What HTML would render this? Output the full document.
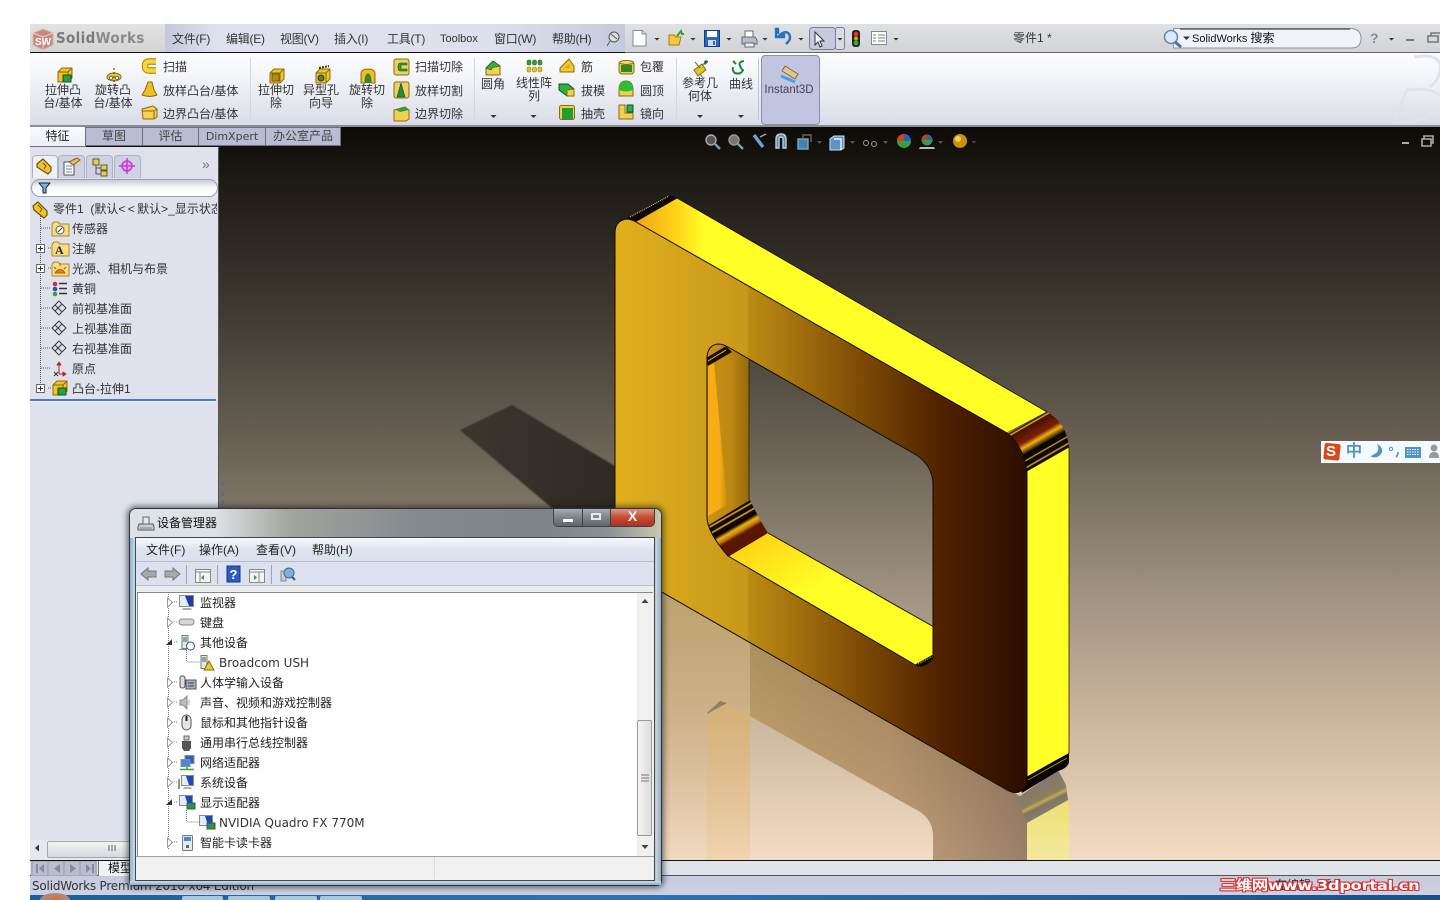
<!DOCTYPE html>
<html><head><meta charset="utf-8"><title>SolidWorks</title>
<style>
html,body{margin:0;padding:0;width:1440px;height:900px;overflow:hidden;background:#fff}
body{position:relative;font:12px/14px "Liberation Sans","WenQuanYi Zen Hei","Noto Sans CJK SC",sans-serif;color:#333}
.a,.t,.c{position:absolute}
.t{white-space:nowrap}
.c{white-space:nowrap;text-align:center;transform:translateX(-50%)}
svg{position:absolute;left:0;top:0;overflow:visible}
.v{font-family:"DejaVu Sans","WenQuanYi Zen Hei",sans-serif}
.m{letter-spacing:-.25px}
.tab{position:absolute;top:127px;height:17px;background:#b9bdd1;border:1px solid #6c7082;border-left:0;text-align:center;line-height:17px;color:#444;box-sizing:content-box}
</style></head><body>

<!-- title bar -->
<div class="a" style="left:30px;top:24px;width:135px;height:28px;background:linear-gradient(#e2e2e2,#d4d4d4)"></div>
<div class="a" style="left:165px;top:24px;width:460px;height:28px;background:linear-gradient(90deg,#c4c8dc,#dfe2ee 12%,#dde0ec 70%,#c6cade)"></div>
<div class="a" style="left:625px;top:24px;width:815px;height:28px;background:linear-gradient(#e0e1e4,#d2d3d6)"></div>
<div class="a" style="left:30px;top:52px;width:595px;height:1px;background:#111"></div>
<div class="a" style="left:625px;top:52px;width:815px;height:1px;background:#66686c"></div>
<div class="a" style="left:56px;top:29px;font:bold 15.5px/18px 'DejaVu Sans',sans-serif;letter-spacing:.4px;color:#8a8a8c;white-space:nowrap;transform:scaleX(.87);transform-origin:left"><span style="color:#7a7a7c">Solid</span>Works</div>

<!-- ribbon -->
<div class="a" style="left:30px;top:53px;width:1410px;height:72px;background:linear-gradient(#fdfdfe,#f3f4f8 35%,#d9dce8)"></div>
<div class="a" style="left:30px;top:125px;width:1410px;height:2px;background:#8a8c98"></div>
<div class="a" style="left:250px;top:58px;width:1px;height:62px;background:#d4d6e0"></div>
<div class="a" style="left:474px;top:58px;width:1px;height:62px;background:#d4d6e0"></div>
<div class="a" style="left:676px;top:58px;width:1px;height:62px;background:#d4d6e0"></div>
<div class="a" style="left:758px;top:58px;width:1px;height:62px;background:#c4c6d2"></div>
<div class="a" style="left:761px;top:55px;width:57px;height:68px;background:#c2c5e0;border:1px solid #8a8ea8;border-radius:4px"></div>

<!-- viewport -->
<div class="a" style="left:219px;top:127px;width:1221px;height:733px;background:linear-gradient(#0e0b07 0,#1f1b16 8%,#3d372f 24%,#6b6356 44%,#a09382 64%,#c9b49c 80%,#f3dcc3 100%)"></div>
<div class="a" style="left:30px;top:127px;width:311px;height:20px;background:#14100c"></div>

<!-- left panel -->
<div class="a" style="left:30px;top:147px;width:188px;height:713px;background:#dfe2ed"></div>
<div class="a" style="left:218px;top:147px;width:1px;height:713px;background:#555"></div>
<div class="a" style="left:30px;top:399px;width:186px;height:2px;background:#4a7db5"></div>
<div class="a" style="left:30px;top:401px;width:186px;height:1px;background:#f2f4f8"></div>

<!-- tabs -->
<div class="a" style="left:30px;top:126px;width:310px;height:1px;background:#8a8c98"></div>
<div class="tab" style="left:86px;width:56px">草图</div>
<div class="tab" style="left:143px;width:55px">评估</div>
<div class="tab v" style="left:199px;width:66px;font-size:11px">DimXpert</div>
<div class="tab" style="left:266px;width:74px">办公室产品</div>
<div class="a" style="left:30px;top:127px;width:55px;height:19px;background:linear-gradient(#fafbfd,#eceef4);border-right:1px solid #6c7082;border-bottom:1px solid #6c7082;text-align:center;line-height:18px;color:#222">特征</div>

<!-- panel tab strip -->
<div class="a" style="left:32px;top:155px;width:24px;height:22px;background:#eef0f6;border:1px solid #aeb2c2;border-bottom:0;border-radius:4px 4px 0 0"></div>
<div class="a" style="left:58px;top:155px;width:25px;height:22px;background:#cfd2e0;border:1px solid #aeb2c2;border-bottom:0;border-radius:4px 4px 0 0"></div>
<div class="a" style="left:86px;top:155px;width:25px;height:22px;background:#cfd2e0;border:1px solid #aeb2c2;border-bottom:0;border-radius:4px 4px 0 0"></div>
<div class="a" style="left:114px;top:155px;width:25px;height:22px;background:#cfd2e0;border:1px solid #aeb2c2;border-bottom:0;border-radius:4px 4px 0 0"></div>
<div class="a" style="left:31px;top:179px;width:185px;height:16px;background:linear-gradient(#c9ccd8,#f6f7fa 45%,#fff);border:1px solid #9a9eac;border-radius:9px"></div>
<div class="t" style="left:202px;top:157px;color:#777;font-size:14px">»</div>

<!-- scrollbar + model tabs + status -->
<div class="a" style="left:30px;top:840px;width:188px;height:20px;background:#e6e8ef"></div>
<div class="a" style="left:47px;top:841px;width:85px;height:15px;background:linear-gradient(#f4f4f4,#d6d8dc);border:1px solid #a4a6ac;border-radius:2px"></div>
<div class="a" style="left:30px;top:860px;width:1410px;height:1px;background:#111"></div>
<div class="a" style="left:30px;top:861px;width:1410px;height:14px;background:#e1e3ea"></div>
<div class="a" style="left:30px;top:875px;width:1410px;height:1px;background:#555"></div>
<div class="a" style="left:30px;top:876px;width:1410px;height:19px;background:linear-gradient(#c6cadd,#cdd1e2)"></div>
<div class="a" style="left:30px;top:895px;width:1410px;height:5px;background:linear-gradient(90deg,#1b5f98,#2c75b2 40%,#1d4f86)"></div>
<div class="a" style="left:31px;top:861px;width:66px;height:15px;background:#a8acbc"></div>
<div class="a" style="left:33px;top:862px;width:14px;height:13px;background:#b9bdcc;box-shadow:16px 0 #b9bdcc,32px 0 #b9bdcc,48px 0 #b9bdcc"></div>
<div class="a" style="left:98px;top:861px;width:40px;height:15px;background:#f1f2f6;border-left:1px solid #777"></div>
<div class="t" style="left:108px;top:861px;color:#111">模型</div>
<div class="t v" style="left:32px;top:879px;font-size:12px;color:#333;letter-spacing:-.2px">SolidWorks Premium 2010 x64 Edition</div>
<div class="t" style="left:1275px;top:878px;color:#222">在编辑</div><div class="t" style="left:1320px;top:878px;color:#222">零件</div>

<!-- main art -->
<svg width="1440" height="900" viewBox="0 0 1440 900">
<defs>
<linearGradient id="fr" gradientUnits="userSpaceOnUse" x1="615" y1="0" x2="1027" y2="0">
<stop offset="0" stop-color="#e0b01e"/><stop offset=".32" stop-color="#c9981a"/><stop offset=".325" stop-color="#bb8c14"/><stop offset=".4" stop-color="#ac7a10"/><stop offset=".6" stop-color="#7c4a04"/><stop offset=".8" stop-color="#4e2000"/><stop offset="1" stop-color="#2c0d00"/>
</linearGradient>
<linearGradient id="tp" gradientUnits="userSpaceOnUse" x1="640" y1="0" x2="705" y2="0"><stop offset="0" stop-color="#f3a814"/><stop offset=".6" stop-color="#ffd818"/><stop offset="1" stop-color="#ffff26"/></linearGradient>
<linearGradient id="lw" gradientUnits="userSpaceOnUse" x1="708" y1="0" x2="749" y2="0"><stop offset="0" stop-color="#c89212"/><stop offset=".55" stop-color="#bb8812"/><stop offset="1" stop-color="#96690c"/></linearGradient>
<linearGradient id="bw" gradientUnits="userSpaceOnUse" x1="745" y1="520" x2="800" y2="600"><stop offset="0" stop-color="#ffc810"/><stop offset=".5" stop-color="#ffe41c"/><stop offset="1" stop-color="#ffff26"/></linearGradient>
<linearGradient id="cb" gradientUnits="userSpaceOnUse" x1="1026" y1="422" x2="1049" y2="462">
<stop offset="0" stop-color="#ffe020"/><stop offset=".04" stop-color="#200800"/><stop offset=".08" stop-color="#e8c040"/><stop offset=".1" stop-color="#4a1004"/><stop offset=".36" stop-color="#7a2006"/><stop offset=".46" stop-color="#f0b010"/><stop offset=".54" stop-color="#7a5000"/><stop offset=".6" stop-color="#080300"/><stop offset=".7" stop-color="#100600"/><stop offset=".72" stop-color="#ddb030"/><stop offset=".75" stop-color="#120700"/><stop offset=".83" stop-color="#120700"/><stop offset=".86" stop-color="#ddb030"/><stop offset=".89" stop-color="#120700"/><stop offset=".98" stop-color="#120700"/><stop offset="1" stop-color="#ffff26"/>
</linearGradient>
<linearGradient id="cb2" gradientUnits="userSpaceOnUse" x1="727" y1="508" x2="750" y2="548">
<stop offset="0" stop-color="#180800"/><stop offset=".14" stop-color="#180800"/><stop offset=".17" stop-color="#e8c040"/><stop offset=".2" stop-color="#180800"/><stop offset=".27" stop-color="#180800"/><stop offset=".3" stop-color="#e8c040"/><stop offset=".33" stop-color="#180800"/><stop offset=".42" stop-color="#080300"/><stop offset=".5" stop-color="#f0b010"/><stop offset=".58" stop-color="#c07c08"/><stop offset=".65" stop-color="#5c1604"/><stop offset=".9" stop-color="#5a1403"/><stop offset=".94" stop-color="#180600"/><stop offset="1" stop-color="#ffe020"/>
</linearGradient>
<linearGradient id="rf" gradientUnits="userSpaceOnUse" x1="750" y1="0" x2="1027" y2="0">
<stop offset="0" stop-color="#a88030" stop-opacity=".5"/><stop offset=".5" stop-color="#805018" stop-opacity=".42"/><stop offset="1" stop-color="#3a1c08" stop-opacity=".48"/>
</linearGradient>
<linearGradient id="rl" gradientUnits="userSpaceOnUse" x1="0" y1="590" x2="0" y2="860">
<stop offset="0" stop-color="#d0b060" stop-opacity=".6"/><stop offset=".5" stop-color="#d4b070" stop-opacity=".4"/><stop offset="1" stop-color="#e0c090" stop-opacity=".1"/>
</linearGradient>
<linearGradient id="rc" gradientUnits="userSpaceOnUse" x1="0" y1="713" x2="0" y2="860">
<stop offset="0" stop-color="#f0b040" stop-opacity=".22"/><stop offset="1" stop-color="#f0b040" stop-opacity=".12"/>
</linearGradient>
<linearGradient id="wd" gradientUnits="userSpaceOnUse" x1="708" y1="0" x2="727" y2="0"><stop offset="0" stop-color="#f7ae14"/><stop offset=".6" stop-color="#f6ac14"/><stop offset="1" stop-color="#f6ac14" stop-opacity=".15"/></linearGradient>
<linearGradient id="sh" gradientUnits="userSpaceOnUse" x1="470" y1="420" x2="610" y2="500"><stop offset="0" stop-color="#332e27" stop-opacity=".85"/><stop offset="1" stop-color="#2a2520" stop-opacity=".95"/></linearGradient>
<linearGradient id="rfy" x1="0" y1="0" x2="0" y2="1"><stop offset="0" stop-color="#ece070"/><stop offset="1" stop-color="#f4e8a0"/></linearGradient>
<linearGradient id="rfg" gradientUnits="userSpaceOnUse" x1="1035" y1="785" x2="1050" y2="815"><stop offset="0" stop-color="#85796a"/><stop offset=".45" stop-color="#8c7e60"/><stop offset=".55" stop-color="#c0a850"/><stop offset=".65" stop-color="#807464"/><stop offset="1" stop-color="#8a7e70"/></linearGradient>

<g id="yb"><path d="M2 5 6 1h10v10l-4 4H2z" fill="#f4c420" stroke="#8a6a10"/><path d="M2 5h10v10M12 5l4-4" fill="none" stroke="#8a6a10"/></g>
<g id="fold"><path d="M1 4 1 16h17V4H9L7 2H3z" fill="#f8dc80" stroke="#a88830"/></g>
</defs>

<!-- floor shadow -->
<path d="M460 430 512 405 615 466V520H566Z" fill="url(#sh)" style="filter:blur(.8px)"/>

<!-- reflection -->
<path d="M615 566 750 643V860H615Z" fill="url(#rl)"/>
<path d="M750 643 1027 800V860H933V836Q933 817 913 808L750 716Z" fill="url(#rf)"/>
<path d="M707 713 727 702 750 716V860H707Z" fill="url(#rc)"/>
<path d="M707 713 720 701 727 703 707 714Z" fill="#77705e" fill-opacity=".75"/>
<path d="M1017 798 1058 770 1066 785 1068 800 1027 823Z" fill="url(#rfg)"/>
<path d="M1027 823 1069 800V860H1027Z" fill="url(#rfy)"/>

<!-- inner hole walls -->
<path d="M704 340H749V503L704 530Z" fill="url(#lw)"/>
<path d="M708 362 714 362 727 505 708 516Z" fill="url(#wd)"/>
<path d="M704 528 750 500Q758 517 768 533L728 559 704 550Z" fill="url(#cb2)"/>
<path d="M726 558 768 533 934 627V672H915Z" fill="url(#bw)"/>
<path d="M768 533 934 627" stroke="#1a1000" fill="none"/>
<path d="M749 360V500" stroke="#3a2a10" fill="none"/>
<path d="M706 358 726 346 732 352 708 366Z" fill="#1c0c00"/><path d="M708 361 726 350" stroke="#e8c040" fill="none"/>
<path d="M916 664 934 654V672H916Z" fill="#0c0600"/><path d="M918 664 933 656" stroke="#eeee80" stroke-dasharray="1 1" fill="none"/>

<!-- outer top / right faces -->
<path d="M635 222 677 198 1047 412 1007 433Z" fill="url(#tp)" stroke="#1a1000" stroke-width=".8"/>
<path d="M626 219 670 195 677 198 635 222Z" fill="#0e0700"/>
<path d="M630 217 669 196" stroke="#e4e0c4" stroke-dasharray="1 1" fill="none"/>
<path d="M1007 433 1047 412Q1066 422 1069 447L1027 472Z" fill="url(#cb)"/>
<path d="M1027 471 1069 447V753L1027 777Z" fill="#ffff26" stroke="#2a2000" stroke-width=".8"/>
<path d="M1027 777 1069 753V762Q1068 768 1058 771L1022 793 1020 785Z" fill="#0a0500"/>
<path d="M1027 775 1068 753" stroke="#ffef60" stroke-width="1" fill="none"/>
<path d="M1028 780 1067 758" stroke="#e0c040" stroke-width=".7" fill="none"/>

<!-- front face -->
<path fill="url(#fr)" fill-rule="evenodd" stroke="#120a00" stroke-width="1" d="M626 219Q615 221 615 233V555Q615 565 625 571L1007 790Q1019 797 1027 785V478Q1027 450 1007 433L636 222Q631 219 626 219ZM718 344Q708 345 707 357V517Q707 532 728 556L912 663Q924 671 933 658V487Q934 465 913 453L728 347Q723 344 718 344Z"/>

<!-- window frame controls -->
<path d="M1402 143h7" stroke="#aaa" stroke-width="2"/><path d="M1422 139v7h9v-7zM1424 139v-3h9v7h-2" fill="none" stroke="#aaa" stroke-width="1.6"/>

<!-- viewport toolbar -->
<g fill="none" stroke-width="1.4">
<circle cx="711" cy="140" r="5" stroke="#aaa" fill="#555"/><path d="M715 144l5 5" stroke="#6ea0d0" stroke-width="2.4"/>
<circle cx="734" cy="140" r="5" stroke="#999" fill="#777"/><path d="M738 144l5 5" stroke="#6ea0d0" stroke-width="2.4"/>
<path d="M754 135l9 12" stroke="#6ea0d0" stroke-width="3.4"/><path d="M760 137l6-3" stroke="#9ac"/>
<path d="M776 148v-9q0-5 5-5t5 5v9h-3v-9q0-2-2-2t-2 2v9z" fill="#5e88a8" stroke="#bcd"/>
<rect x="798" y="139" width="10" height="10" fill="#4a7fb5" stroke="#7ab"/><path d="M803 139v-4h8v7" stroke="#666"/>
<path d="M830 139l4-3h10v12l-3 2h-11z" fill="#5e92c4" stroke="#cde" stroke-width="1"/><path d="M834 139h7v11" stroke="#eef"/>
</g>
<circle cx="866" cy="143" r="2.5" fill="none" stroke="#999"/><circle cx="874" cy="144" r="2.5" fill="none" stroke="#999"/>
<circle cx="904" cy="141" r="7" fill="#38a040"/><path d="M904 141V134a7 7 0 0 1 7 7z" fill="#2a5ec0"/><path d="M904 141V134a7 7 0 0 0-7 7h7z" fill="#d84020"/>
<circle cx="927" cy="140" r="5.5" fill="#3a9a48"/><path d="M927 140v-5.500a5.500 5.500 0 0 1 5 5.500z" fill="#3060c0"/><path d="M927 140v-5.500a5.500 5.500 0 0 0-5 5.500z" fill="#d03c20"/>
<path d="M920 147h14l1 2h-16z" fill="#bbb"/>
<circle cx="960" cy="141" r="7" fill="#c89010"/><circle cx="958" cy="139" r="3" fill="#f0d050"/>
<g fill="#555"><path d="M817 141h5l-2.500 3zM850 141h5l-2.500 3zM883 141h5l-2.500 3zM938 141h5l-2.500 3zM972 141h4l-2 2.500z"/></g>

<!-- DS logo -->
<g fill="none" stroke="#e0e3ed" stroke-width="3"><path d="M1414 57q24-4 26 8t-10 22"/><path d="M1394 122l13-32q26-3 33 6M1397 122q28 2 43-14"/></g>

<!-- titlebar icons -->
<path d="M33 33 43 29 53 33V45L43 50 33 45Z" fill="#c8887e" stroke="#d8b8b0"/>
<path d="M33 33 43 37 53 33M43 37V50" fill="none" stroke="#e8d0c8"/>
<text x="43" y="45" text-anchor="middle" font-family="Liberation Sans" font-weight="bold" font-size="10" fill="#fff">SW</text>
<g transform="translate(632 30)"><path d="M1 .5H10L14 4V16H1Z" fill="#fff" stroke="#7a8aa0"/><path d="M10 .5V4H14" fill="#dde" stroke="#7a8aa0"/></g>
<g transform="translate(668 30)"><path d="M1 5H6L8 7H13L11 15H1Z" fill="#f6c83c" stroke="#a87c10"/><path d="M9 6 13 1l1 3 2 0" fill="none" stroke="#3aa030" stroke-width="2"/></g>
<g transform="translate(704 30)"><rect x=".5" y=".5" width="15" height="16" fill="#2c66b8" stroke="#143a80"/><rect x="3" y="1" width="10" height="6" fill="#fff"/><rect x="4" y="10" width="8" height="6" fill="#cfd8e8"/><rect x="9" y="11" width="2" height="4" fill="#2c66b8"/></g>
<g transform="translate(740 30)"><path d="M5 1h8v6H5z" fill="#fff" stroke="#667"/><path d="M2 7h13l2 3v4H2z" fill="#b8bcc8" stroke="#667"/><path d="M5 13h9v4H5z" fill="#eee" stroke="#667"/></g>
<path d="M778 34v-5l-2 0 0 8h8l0-2h-4q6-5 9-1 3 5-3 10" fill="none" stroke="#2a72c0" stroke-width="2.4"/>
<rect x="809.500" y="27.500" width="26" height="22" rx="3" fill="#c6cade" stroke="#7a8090"/><rect x="835.500" y="27.500" width="9" height="22" rx="2" fill="#dcdde4" stroke="#7a8090"/>
<path d="M815 32v13l3-3 2 5 2-1-2-5h4z" fill="#fff" stroke="#333"/>
<rect x="852" y="30" width="8" height="17" rx="3" fill="#222"/><circle cx="856" cy="34" r="2.400" fill="#e03020"/><circle cx="856" cy="38.500" r="2.200" fill="#c0a020"/><circle cx="856" cy="43" r="2.400" fill="#30b030"/>
<rect x="871.500" y="31.500" width="15" height="13" fill="#fff" stroke="#7a8a9a"/><path d="M873 35h3M878 35h7M873 38h3M878 38h7M873 41h3M878 41h7" stroke="#6a8a5a"/>
<g fill="#333"><path d="M654.500 38h5l-2.500 2.500zM690.500 38h5l-2.500 2.500zM726.500 38h5l-2.500 2.500zM762.500 38h5l-2.500 2.500zM798.500 38h5l-2.500 2.500zM837.500 38h5l-2.500 2.500zM893.500 38h5l-2.500 2.500zM1389 38h5l-2.500 2.500z"/></g>
<circle cx="614" cy="37" r="5" fill="#ddd" stroke="#555"/><path d="M610 41l-3 5M611 34l6 5" stroke="#555" fill="none"/>
<path d="M1173.500 28.500H1350q11 0 11 10t-11 9.500H1173.500Z" fill="#f2f3f8" stroke="#8e92a2"/>
<path d="M1180 29h170" stroke="#5a6070" stroke-width="1.400"/>
<circle cx="1171" cy="37" r="6.500" fill="#dce8f6" stroke="#5f8cb8" stroke-width="1.600"/><path d="M1175 42l6 5" stroke="#3878b0" stroke-width="3"/>
<path d="M1183 36.500h7l-3.500 3.500z" fill="#333"/>
<path d="M1406 40h8" stroke="#777" stroke-width="2"/><path d="M1428 36v6h10v-6zM1431 36v-3h9" fill="none" stroke="#777" stroke-width="1.600"/>

<!-- ribbon icons -->
<g stroke-linejoin="round">
<g transform="translate(56 67)"><use href="#yb"/><path d="M7 8h8v7H7z" fill="#2aa040" stroke="#105020"/></g>
<g transform="translate(106 69)"><ellipse cx="8" cy="8" rx="7" ry="4" fill="#f4c420" stroke="#8a6a10"/><path d="M8 -1V16" stroke="#333" stroke-dasharray="2 2"/><circle cx="5" cy="9" r="1.700" fill="#fff" stroke="#666"/><circle cx="11" cy="9" r="1.700" fill="#fff" stroke="#666"/></g>
<path d="M156 61.500H149Q145 61.500 145 66T149 70.500H156" fill="none" stroke="#9a7a10" stroke-width="6.400"/><path d="M156 61.500H149Q145 61.500 145 66T149 70.500H156" fill="none" stroke="#f8d430" stroke-width="4.600"/>
<path d="M148 82h4l2 8 3 5q-7 3-15 0l3-5z" fill="#f0bc20" stroke="#8a6a10"/>
<path d="M142 109l11-3 4 3v8l-3 2h-11z" fill="#f6d050" stroke="#8a6a10"/><path d="M142 111h12v8M154 111l3-2" fill="none" stroke="#8a6a10"/>
<g transform="translate(268 68)"><use href="#yb"/><rect x="4" y="6" width="7" height="7" fill="#a89020" stroke="#7a5a00"/></g>
<g transform="translate(314 68)"><use href="#yb"/><circle cx="7" cy="10" r="3" fill="#4a8030" stroke="#333"/><path d="M5 0l10-2" stroke="#333" stroke-dasharray="2 1" stroke-width="2"/></g>
<g transform="translate(360 68)"><path d="M1 15V6Q1 1 8 1T15 6V15H11Q11 6 8 6T5 15Z" fill="#f0c020" stroke="#8a6a10"/><path d="M5 15Q5 6 8 6T11 15Z" fill="#2a8a38"/></g>
<g transform="translate(393 58)"><rect x="1" y="1" width="15" height="16" rx="2" fill="#f0d060" stroke="#8a6a10"/><path d="M14 5H7Q5 5 5 9T7 13H14V11H8V7H14Z" fill="#2aa040" stroke="#105020" stroke-width=".6"/></g>
<g transform="translate(393 81)"><rect x="1" y="1" width="15" height="16" rx="2" fill="#f0d060" stroke="#8a6a10"/><path d="M8 2 12 16H4Z" fill="#2a8a38" stroke="#105020" stroke-width=".6"/></g>
<g transform="translate(393 105)"><path d="M1 5l11-3 4 3v9l-3 2H1z" fill="#f4d050" stroke="#8a6a10"/><path d="M3 5l9-3 4 3-9 2z" fill="#2aa040"/></g>
<g transform="translate(485 60)"><path d="M1 8 8 1l7 5v9H1z" fill="#f4d050" stroke="#8a6a10"/><path d="M1 8 8 1l7 5-4 1q-4 0-5 3z" fill="#34b040" stroke="#105020" stroke-width=".6"/></g>
<g fill="#3a9a3a" stroke="#1c5a1c" stroke-width=".5"><rect x="527" y="60" width="4" height="5" rx="1.500"/><rect x="532.500" y="60" width="4" height="5" rx="1.500"/><rect x="538" y="60" width="4" height="5" rx="1.500"/></g>
<g fill="#e8c030" stroke="#8a6a10" stroke-width=".5"><rect x="527" y="67" width="4" height="5" rx="1.500"/><rect x="532.500" y="67" width="4" height="5" rx="1.500"/><rect x="538" y="67" width="4" height="5" rx="1.500"/></g>
<path d="M560 68 569 59l5 7v6h-14z" fill="#f0c830" stroke="#8a6a10"/><path d="M564 68l5-4 1 4z" fill="#d8a818"/>
<path d="M559 84h9l6 5v7h-7l-8-6z" fill="#2cb040" stroke="#105020"/><path d="M567 90l7-1v7h-7z" fill="#f0d050" stroke="#8a6a10"/>
<rect x="559.500" y="105.500" width="15" height="14" rx="2" fill="#f0d050" stroke="#8a6a10"/><rect x="562" y="108" width="11" height="11" fill="#1ea030"/>
<g transform="translate(618 59)"><rect x="1" y="2" width="15" height="13" rx="3" fill="#ead040" stroke="#8a6a10"/><rect x="3" y="6" width="11" height="7" fill="#2c8a2c"/><ellipse cx="8.500" cy="3.500" rx="7" ry="2" fill="#f4d860" stroke="#8a6a10"/></g>
<path d="M619 90q0-9 7-9t7 9v6h-14z" fill="#f0d050" stroke="#8a6a10"/><path d="M619 90q0-9 7-9t7 9q-7 3-14 0z" fill="#28c030"/>
<g transform="translate(618 104)"><path d="M1 1h6v8h8v6H1z" fill="#f0d050" stroke="#8a6a10"/><path d="M9 1h6v7H9z" fill="#2cb040" stroke="#105020"/></g>
<g transform="translate(692 60)"><path d="M2 10 10 4l4 6-8 6z" fill="#e8c030" stroke="#8a6a10"/><path d="M3 2l5 6M10 5l6-4M13 1v4M8 14l3 4" stroke="#208a30"/><path d="M12 2h4M14 0v4" stroke="#333"/></g>
<path d="M744 61q-6 1-4 5t3 4q-2 5-8 3-3-2-2-6" fill="none" stroke="#1e8a30" stroke-width="2"/><path d="M733 61l3 3" stroke="#1e8a30" stroke-width="2"/>
<g transform="translate(781 66)"><path d="M4 0 17 8 14 13 1 5Z" fill="#e0c890" stroke="#7a6a40"/><path d="M0 10 14 16" stroke="#4aa0e0" stroke-width="3"/></g>
<g fill="#333"><path d="M490.500 115h6l-3 3zM530.500 115h6l-3 3zM697 115h6l-3 3zM738 115h6l-3 3z"/></g>

<!-- panel tab icons -->
<g transform="translate(36 158)"><path d="M1 6l6-5 8 8v4l-3 3-11-7z" fill="#f0c428" stroke="#6a5010" stroke-width="1.200"/><path d="M7 5l3 3-2 3" fill="none" stroke="#6a5010"/></g>
<g transform="translate(63 158)"><path d="M1 4h10v13H1z" fill="#fff" stroke="#456"/><path d="M3 8h6M3 11h6M3 14h6" stroke="#5a8ab0"/><path d="M6 4l8-4 3 2-7 5z" fill="#e8c060" stroke="#806020"/></g>
<g transform="translate(92 158)"><rect x="1" y="1" width="6" height="6" fill="#ead040" stroke="#555"/><rect x="9" y="7" width="6" height="5" fill="#ead040" stroke="#555"/><rect x="9" y="13" width="6" height="5" fill="#ead040" stroke="#555"/><path d="M4 7v9h5M4 10h5" fill="none" stroke="#555"/></g>
<g transform="translate(118 158)" fill="none" stroke="#c040d0" stroke-width="1.500"><circle cx="9" cy="8" r="5" fill="#e0a8e8"/><path d="M9 0v16M1 8h16"/></g>
<path d="M39 183h11l-4 5v5h-3v-5z" fill="#7ab0e0" stroke="#123" stroke-width="1"/>

<!-- tree lines -->
<g stroke="#555" stroke-dasharray="1 1" fill="none">
<path d="M40.500 216V388M41 228h10M48 248h3M48 268h3M41 288h10M41 308h10M41 328h10M41 348h10M41 368h10M48 388h3"/>
</g>
<g fill="#fff" stroke="#666"><rect x="36.500" y="244.500" width="8" height="8"/><rect x="36.500" y="264.500" width="8" height="8"/><rect x="36.500" y="384.500" width="8" height="8"/></g>
<path d="M38 248.500h5M40.500 246v5M38 268.500h5M40.500 266v5M38 388.500h5M40.500 386v5" stroke="#333"/>
<!-- tree icons -->
<g transform="translate(32 201)"><path d="M1 5l5-4 9 9v4l-3 3-10-8z" fill="#f0c428" stroke="#6a5010" stroke-width="1.200"/><path d="M6 4l4 4-2 3" fill="none" stroke="#6a5010"/></g>
<use href="#fold" x="51" y="220"/><circle cx="60" cy="230" r="4" fill="#fff" stroke="#555"/><path d="M58 232l4-4" stroke="#333"/>
<use href="#fold" x="51" y="240"/><text x="55" y="254" font-family="Liberation Serif,serif" font-weight="bold" font-size="12" fill="#224">A</text>
<use href="#fold" x="51" y="260"/><path d="M55 273q5-7 10 0zM60 263v3M54 267l2 2M66 267l-2 2" fill="#e88020" stroke="#c05010"/>
<circle cx="55" cy="284" r="2.300" fill="#d03030"/><circle cx="55" cy="289" r="2.300" fill="#3050c0"/><circle cx="55" cy="294" r="2.300" fill="#30a040"/>
<path d="M59 283.500h8M59 288.500h8M59 293.500h8" stroke="#333" stroke-width="1.400"/>
<g fill="none" stroke="#333"><path d="M59 301 66 308 59 315 52 308zM55 305l7 7M55 311l7-7" stroke-width=".9"/><path d="M59 321 66 328 59 335 52 328zM55 325l7 7M55 331l7-7" stroke-width=".9"/><path d="M59 341 66 348 59 355 52 348zM55 345l7 7M55 351l7-7" stroke-width=".9"/></g>
<path d="M59 363V374M59 362l-2 3h4zM59 374h7M66 374l-3-2v4z" fill="#c02020" stroke="#c02020"/><path d="M54 372l4 4M58 372l-4 4" stroke="#333"/>
<g transform="translate(51 380)"><use href="#yb"/><path d="M7 8h8v7H7z" fill="#2aa040" stroke="#105020"/></g>
<path d="M35 848l4-3.500v7z" fill="#333"/>
<path d="M109 845v6M112 845v6M115 845v6" stroke="#666"/>
<g fill="#858a9c"><path d="M36 864h2v9h-2zM44 864v9l-5-4.500zM60 864v9l-6-4.500zM70 864v9l6-4.500zM86 864v9l5-4.500zM92 864h2v9h-2z"/></g>
<!-- splitter -->
<g fill="#5a6a8a"><path d="M224 481l-3 3 3 3zM224 491l-3 3 3 3zM224 499l-3 3 3 3z"/></g>
<!-- IME -->
<rect x="1321" y="441" width="119" height="22" fill="#f3f9fd"/>
<rect x="1324" y="443.500" width="16" height="16.500" rx="2" fill="#d84a18" transform="rotate(6 1332 452)"/>
<path d="M1377 444q3 6-1 9t-6 3q5 3 9 0t3-7q-2-4-5-5z" fill="#4f93c6"/>
<circle cx="1391" cy="449" r="1.700" fill="none" stroke="#4f93c6"/><path d="M1398 452q0 3-2 5" stroke="#4f93c6" stroke-width="1.600" fill="none"/>
<rect x="1405" y="447" width="16" height="11" fill="#4f93c6"/><path d="M1407 449.500h12M1407 452h12M1407 454.500h12" stroke="#f3f9fd" stroke-dasharray="1.500 1"/>
<circle cx="1434" cy="448" r="3.500" fill="#999"/><path d="M1429 458q0-6 5-6t5 6z" fill="#999"/>
</g>
</svg>

<!-- text: menu -->
<div class="t m" style="left:172px;top:32px">文件(F)</div><div class="t m" style="left:226px;top:32px">编辑(E)</div><div class="t m" style="left:280px;top:32px">视图(V)</div><div class="t m" style="left:334px;top:32px">插入(I)</div><div class="t m" style="left:387px;top:32px">工具(T)</div><div class="t" style="left:440px;top:32px;font-size:11px">Toolbox</div><div class="t m" style="left:494px;top:32px">窗口(W)</div><div class="t m" style="left:552px;top:32px">帮助(H)</div>
<div class="t" style="left:1013px;top:31px">零件1 *</div>
<div class="t" style="left:1192px;top:31px;color:#111;font-size:11px">SolidWorks <span style="font-size:12px">搜索</span></div>
<div class="t" style="left:1370px;top:31px;color:#888;font-weight:bold;font-size:14px">?</div>

<!-- text: ribbon -->
<div class="c" style="left:63px;top:84px;line-height:13px">拉伸凸<br>台/基体</div>
<div class="c" style="left:113px;top:84px;line-height:13px">旋转凸<br>台/基体</div>
<div class="t" style="left:163px;top:60px">扫描</div><div class="t" style="left:163px;top:84px">放样凸台/基体</div><div class="t" style="left:163px;top:107px">边界凸台/基体</div>
<div class="c" style="left:276px;top:84px;line-height:13px">拉伸切<br>除</div>
<div class="c" style="left:321px;top:84px;line-height:13px">异型孔<br>向导</div>
<div class="c" style="left:367px;top:84px;line-height:13px">旋转切<br>除</div>
<div class="t" style="left:415px;top:60px">扫描切除</div><div class="t" style="left:415px;top:84px">放样切割</div><div class="t" style="left:415px;top:107px">边界切除</div>
<div class="c" style="left:493px;top:77px">圆角</div>
<div class="c" style="left:534px;top:77px;line-height:13px">线性阵<br>列</div>
<div class="t" style="left:581px;top:60px">筋</div><div class="t" style="left:581px;top:84px">拔模</div><div class="t" style="left:581px;top:107px">抽壳</div>
<div class="t" style="left:640px;top:60px">包覆</div><div class="t" style="left:640px;top:84px">圆顶</div><div class="t" style="left:640px;top:107px">镜向</div>
<div class="c" style="left:700px;top:77px;line-height:13px">参考几<br>何体</div>
<div class="c" style="left:741px;top:77px">曲线</div>
<div class="c" style="left:789px;top:83px;font-size:11.500px;color:#445">Instant3D</div>

<!-- text: tree -->
<div class="a" style="left:30px;top:200px;width:187px;height:200px;overflow:hidden">
<div class="t" style="left:23px;top:2px">零件1&nbsp;&nbsp;(默认&lt;&thinsp;&lt;&thinsp;默认&gt;_显示状态</div>
<div class="t" style="left:42px;top:22px">传感器</div>
<div class="t" style="left:42px;top:42px">注解</div>
<div class="t" style="left:42px;top:62px">光源、相机与布景</div>
<div class="t" style="left:42px;top:82px">黄铜</div>
<div class="t" style="left:42px;top:102px">前视基准面</div>
<div class="t" style="left:42px;top:122px">上视基准面</div>
<div class="t" style="left:42px;top:142px">右视基准面</div>
<div class="t" style="left:42px;top:162px">原点</div>
<div class="t" style="left:42px;top:182px">凸台-拉伸1</div>
</div>

<!-- IME text -->
<div class="t" style="left:1326px;top:443px;font:bold 15px/18px 'Liberation Sans',sans-serif;color:#fff">S</div>
<div class="t" style="left:1346px;top:443px;font:bold 16px/18px 'Liberation Sans','WenQuanYi Zen Hei',sans-serif;color:#4f93c6">中</div>

<!-- taskbar bits -->
<div class="a" style="left:40px;top:893px;width:30px;height:14px;border-radius:50%;background:radial-gradient(#e06a30,#88a0b8)"></div>
<div class="a" style="left:182px;top:896px;width:41px;height:4px;background:#a8c8de;border-radius:2px 2px 0 0"></div>
<div class="a" style="left:228px;top:896px;width:42px;height:4px;background:#a8c8de;border-radius:2px 2px 0 0"></div>
<div class="a" style="left:275px;top:896px;width:42px;height:4px;background:#a8c8de;border-radius:2px 2px 0 0"></div>
<div class="a" style="left:320px;top:896px;width:42px;height:4px;background:#a8c8de;border-radius:2px 2px 0 0"></div>

<!-- watermark -->
<div class="t" style="left:1220px;top:878px;font:bold 13.500px/17px 'DejaVu Sans','WenQuanYi Zen Hei',sans-serif;color:#fff;transform:scaleX(1.2);transform-origin:left;letter-spacing:-.2px;text-shadow:1px 0 #d83030,-1px 0 #d83030,0 1px #d83030,0 -1px #d83030,1px 1px #d83030,-1px -1px #d83030,1px -1px #d83030,-1px 1px #d83030">三维网www.3dportal.cn</div>

<!-- dialog -->
<div class="a" style="left:129px;top:508px;width:533px;height:378px;border-radius:7px 7px 5px 5px;background:linear-gradient(90deg,#a8c0d4 0,#a8c0d4 1.200%,#cfd8e0 2%,#bfc8d0 100%);box-shadow:0 0 6px 2px rgba(20,20,20,.55);box-sizing:border-box;border:1px solid #2c3238"></div>
<div class="a" style="left:130px;top:509px;width:531px;height:29px;border-radius:6px 6px 0 0;background:linear-gradient(90deg,#dde2e6 0,#dee2e5 16%,#a2a49e 30%,#83888c 55%,#7e8488 78%,#8a9096 90%,#c8c8ae 100%)"></div>
<div class="a" style="left:130px;top:538px;width:5px;height:347px;background:linear-gradient(90deg,#8fb0ca,#c8dcec)"></div>
<div class="a" style="left:656px;top:538px;width:5px;height:347px;background:linear-gradient(90deg,#cdd6cc,#b8c8d8 30%,#8fb0ca)"></div>
<div class="a" style="left:130px;top:881px;width:531px;height:4px;background:linear-gradient(#c8dcec,#8fb0ca)"></div>
<div class="t" style="left:157px;top:516px;color:#111">设备管理器</div>
<!-- caption buttons -->
<div class="a" style="left:553px;top:509px;width:102px;height:18px;border:1px solid #3c4248;border-top:0;border-radius:0 0 5px 5px;box-sizing:border-box;overflow:hidden;display:flex">
<div style="width:28px;height:100%;background:linear-gradient(#a8acb0,#7e8488 50%,#5e6468);border-right:1px solid #3c4248;position:relative"><div style="position:absolute;left:9px;top:10px;width:10px;height:3px;background:#fff"></div></div>
<div style="width:27px;height:100%;background:linear-gradient(#a8acb0,#7e8488 50%,#5e6468);border-right:1px solid #3c4248;position:relative"><div style="position:absolute;left:8px;top:4px;width:6px;height:3px;border:2px solid #e8e8e8;box-sizing:content-box"></div></div>
<div style="flex:1;height:100%;background:linear-gradient(#d89a8a,#c84a30 50%,#a83420);position:relative;text-align:center;color:#fff;font:bold 14px/15px 'Liberation Sans',sans-serif">X</div>
</div>
<!-- client -->
<div class="a" style="left:135px;top:537px;width:520px;height:344px;background:#f0f0f0;border:1px solid #40464c;box-sizing:border-box"></div>
<div class="a" style="left:136px;top:538px;width:518px;height:23px;background:linear-gradient(#f6f8fc,#dde4f0 50%,#d9e1ee)"></div>
<div class="a" style="left:136px;top:561px;width:518px;height:1px;background:#b8bcc6"></div>
<div class="a" style="left:136px;top:562px;width:518px;height:23px;background:#dbe1ef"></div>
<div class="a" style="left:136px;top:585px;width:518px;height:7px;background:#ececf0;border-top:1px solid #c0c2c8;box-sizing:border-box"></div>
<div class="a" style="left:137px;top:592px;width:516px;height:264px;background:#fff;border-top:1px solid #888;border-left:1px solid #888;box-sizing:border-box"></div>
<div class="a" style="left:136px;top:856px;width:518px;height:24px;background:#f0f0f0;border-top:1px solid #a0a0a0;box-sizing:border-box"></div>
<div class="a" style="left:434px;top:857px;width:1px;height:22px;background:#dcdcdc"></div>
<div class="a" style="left:637px;top:593px;width:16px;height:263px;background:#f0f0f0"></div>
<div class="a" style="left:637px;top:720px;width:15px;height:116px;background:linear-gradient(90deg,#f4f4f4,#dcdcdc);border:1px solid #999;box-sizing:border-box;border-radius:2px"></div>
<div class="t" style="left:146px;top:543px;color:#222">文件(F)</div><div class="t" style="left:199px;top:543px;color:#222">操作(A)</div><div class="t" style="left:256px;top:543px;color:#222">查看(V)</div><div class="t" style="left:312px;top:543px;color:#222">帮助(H)</div>

<svg width="1440" height="900" viewBox="0 0 1440 900" style="pointer-events:none">
<g transform="translate(136 516)"><path d="M3 8h14l1 3v3H2v-3z" fill="#c8ccd0" stroke="#556"/><rect x="7" y="1" width="6" height="7" fill="#e8e8e0" stroke="#667"/><path d="M4 12h12" stroke="#888"/></g>
<!-- toolbar -->
<path d="M141 574l7-6v3h8v6h-8v3z" fill="#a8a8a8" stroke="#777"/><path d="M180 574l-7-6v3h-8v6h8v3z" fill="#a8a8a8" stroke="#777"/>
<path d="M186.500 565v19M217.500 565v19M271.500 565v19" stroke="#a0a4ae"/>
<g fill="#f4f4f4" stroke="#888"><rect x="195.500" y="569.500" width="15" height="13"/><rect x="249.500" y="569.500" width="15" height="13"/></g><path d="M196 572h15M250 572h15M200 572v10M259 572v10" stroke="#888" fill="none"/>
<path d="M204 575v5l-3-2.500zM254 575v5l3-2.500z" fill="#2a9a3a"/>
<rect x="227" y="566" width="13" height="16" fill="#2c5cc0" stroke="#18388a"/><text x="233.500" y="579" text-anchor="middle" font-family="Liberation Sans" font-weight="bold" font-size="13" fill="#fff">?</text>
<rect x="281" y="571" width="5" height="10" fill="#ccc" stroke="#888"/><circle cx="289" cy="573" r="5" fill="#7fb0dc" stroke="#3a6a9a"/><path d="M292 577l3 3" stroke="#555" stroke-width="2"/>
<!-- tree -->
<g stroke="#777" stroke-dasharray="1 1" fill="none"><path d="M168.500 592V850M174 602h4M174 622h4M174 642h4M174 682h4M174 702h4M174 722h4M174 742h4M174 762h4M174 782h4M174 802h4M174 842h4M186.500 650V662h13M186.500 810V822h13"/></g>
<g fill="#fff" stroke="#999"><path d="M167.500 598l5 4.500-5 4.500zM167.500 618l5 4.500-5 4.500zM167.500 678l5 4.500-5 4.500zM167.500 698l5 4.500-5 4.500zM167.500 718l5 4.500-5 4.500zM167.500 738l5 4.500-5 4.500zM167.500 758l5 4.500-5 4.500zM167.500 778l5 4.500-5 4.500zM167.500 838l5 4.500-5 4.500z"/></g>
<path d="M172 639v6h-6zM172 799v6h-6z" fill="#333"/>
<!-- monitors etc -->
<rect x="179.500" y="595.500" width="14" height="11" fill="#1a3ea8" stroke="#889"/><path d="M180 596h5l4 10h-9z" fill="#e4ecf8"/><path d="M183 608h8l1 2h-10z" fill="#aab"/>
<rect x="179" y="619" width="15" height="6" rx="3" fill="#d8d8d8" stroke="#888"/>
<g transform="translate(180 635)"><rect x="2" y=".5" width="6" height="13" fill="#e4e8ec" stroke="#778"/><rect x="3" y="2" width="4" height="5" fill="#88b088"/><circle cx="10.500" cy="11" r="4" fill="#fff" stroke="#2a58a8"/><path d="M-1 14.500h8" stroke="#888"/></g>
<g transform="translate(200 655)"><rect x="1" y=".5" width="6" height="13" fill="#e4e8ec" stroke="#778"/><rect x="2" y="2" width="4" height="5" fill="#88b088"/><path d="M9 6l5 9H4z" fill="#f4c820" stroke="#8a6a10"/></g>
<g transform="translate(179 675)"><rect x="1" y="1" width="5" height="12" rx="2" fill="#ddd" stroke="#555"/><rect x="7" y="5" width="10" height="9" fill="#a8b0b8" stroke="#555"/><path d="M9 8h6M9 11h6" stroke="#345"/></g>
<path d="M180 700h3l4-4v13l-4-4h-3z" fill="#b8bcc0" stroke="#889"/><path d="M189 700v5" stroke="#aab"/>
<rect x="182" y="715" width="9" height="15" rx="4.500" fill="#e6e6ea" stroke="#555"/><path d="M186.500 716v5" stroke="#222" stroke-width="2"/>
<rect x="184" y="736" width="5" height="4" fill="#ccc" stroke="#666"/><path d="M182 741h9v7l-2 3h-5l-2-3z" fill="#555"/>
<g transform="translate(180 755)"><rect x="5" y=".5" width="9" height="8" fill="#2a62c0" stroke="#889"/><rect x="1" y="4.500" width="9" height="7" fill="#4a88d8" stroke="#889"/><path d="M0 14.500h14M7 12v3" stroke="#3aa040" stroke-width="1.500"/></g>
<g transform="translate(0 180)"><rect x="181.500" y="595.500" width="12" height="10" fill="#1a4ab8" stroke="#889"/><path d="M182 596h4l3 9h-7z" fill="#e4ecf8"/><path d="M184 607h7l1 2h-9z" fill="#aab"/><path d="M179 599v10" stroke="#88a060" stroke-width="2"/></g>
<g transform="translate(0 200)"><rect x="179.500" y="595.500" width="13" height="10" fill="#1a4ab8" stroke="#889"/><path d="M180 596h5l3 9h-8z" fill="#e4ecf8"/><rect x="187" y="603" width="8" height="6" fill="#3a8a4a" stroke="#264"/></g>
<g transform="translate(20 220)"><rect x="179.500" y="595.500" width="13" height="10" fill="#1a4ab8" stroke="#889"/><path d="M180 596h5l3 9h-8z" fill="#e4ecf8"/><rect x="187" y="603" width="8" height="6" fill="#3a8a4a" stroke="#264"/></g>
<g transform="translate(182 835)"><rect x=".5" y=".5" width="10" height="15" rx="1" fill="#e6ebf0" stroke="#778"/><rect x="2" y="2" width="7" height="4" fill="#4a88c8"/><rect x="4" y="10" width="3" height="3" fill="#666"/></g>
<!-- scroll arrows -->
<path d="M645 599l3.500 4h-7zM645 849l3.500-4h-7z" fill="#444"/>
<path d="M641 775h8M641 778h8M641 781h8" stroke="#777"/>
</svg>

<div class="t" style="left:200px;top:596px;color:#222">监视器</div>
<div class="t" style="left:200px;top:616px;color:#222">键盘</div>
<div class="t" style="left:200px;top:636px;color:#222">其他设备</div>
<div class="t v" style="left:219px;top:656px;color:#333">Broadcom USH</div>
<div class="t" style="left:200px;top:676px;color:#222">人体学输入设备</div>
<div class="t" style="left:200px;top:696px;color:#222">声音、视频和游戏控制器</div>
<div class="t" style="left:200px;top:716px;color:#222">鼠标和其他指针设备</div>
<div class="t" style="left:200px;top:736px;color:#222">通用串行总线控制器</div>
<div class="t" style="left:200px;top:756px;color:#222">网络适配器</div>
<div class="t" style="left:200px;top:776px;color:#222">系统设备</div>
<div class="t" style="left:200px;top:796px;color:#222">显示适配器</div>
<div class="t v" style="left:219px;top:816px;color:#333">NVIDIA Quadro FX 770M</div>
<div class="t" style="left:200px;top:836px;color:#222">智能卡读卡器</div>
</body></html>
